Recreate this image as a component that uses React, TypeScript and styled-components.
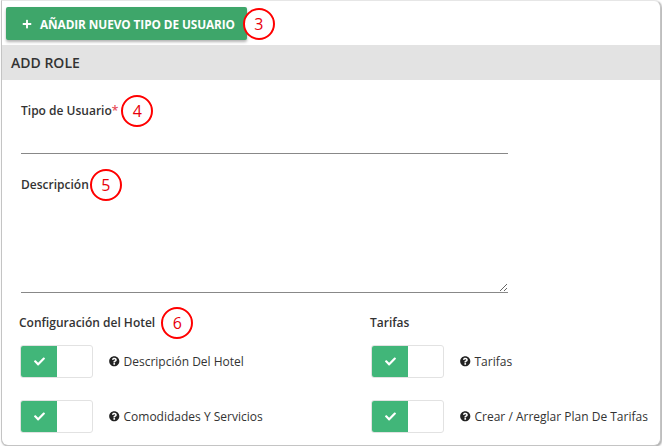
import React from "react";
import styled, { createGlobalStyle } from "styled-components";
import { FaCheck, FaPlus, FaQuestionCircle } from "react-icons/fa";

const Global = createGlobalStyle`
  html, body { margin: 0; padding: 0; background: #fff; }
  body { font-family: "Open Sans", "Liberation Sans", sans-serif; color: #333; }
  * { box-sizing: border-box; }
`;

const Frame = styled.div`
  margin-left: 1px;
  width: 660px;
  height: 446px;
  border: 1px solid #c4c4c4;
  border-top-color: #e6e6e6;
  border-radius: 0 7px 7px 7px;
  box-shadow: 1px 1px 2px rgba(0, 0, 0, 0.35);
  background: #fff;
  overflow: hidden;
  display: flex;
  flex-direction: column;
`;

const Toolbar = styled.div`
  display: flex;
  align-items: center;
  padding: 6px 0 5px 4px;
`;

const AddButton = styled.button`
  display: inline-flex;
  align-items: center;
  gap: 8px;
  height: 33px;
  padding: 0 12px 0 16px;
  border: none;
  border-radius: 2px;
  background: #3ea66a;
  color: #fff;
  font-family: "Open Sans", "Liberation Sans", sans-serif;
  font-weight: 700;
  font-size: 11.8px;
  letter-spacing: -0.08px;
  box-shadow: 0 2px 3px rgba(0, 0, 0, 0.3);
  svg { font-size: 10px; }
`;

const Marker = styled.span<{ $gap: number }>`
  display: inline-flex;
  align-items: center;
  justify-content: center;
  width: 32px;
  height: 32px;
  margin: -8px 0 -8px ${(p) => p.$gap}px;
  border: 2.5px solid #f00;
  border-radius: 50%;
  background: #fff;
  color: #e8000b;
  font-family: "Open Sans", "Liberation Sans", sans-serif;
  font-size: 16px;
  font-weight: 500;
  vertical-align: middle;
  position: relative;
`;

const Header = styled.div`
  height: 35px;
  display: flex;
  align-items: center;
  padding-left: 9px;
  background: #e3e3e3;
  font-size: 14px;
  font-weight: 600;
  color: #333;
`;

const Body = styled.div`
  padding: 0 19px;
  display: flex;
  flex-direction: column;
`;

const Label = styled.div<{ $top: number }>`
  margin-top: ${(p) => p.$top}px;
  display: flex;
  align-items: center;
  height: 17px;
  font-size: 12px;
  font-weight: 600;
  color: #333;
  white-space: nowrap;
`;

const Star = styled.span`
  color: #e74c5a;
`;

const TextInput = styled.input`
  width: 487px;
  height: 35px;
  border: none;
  border-bottom: 1px solid #888;
  outline: none;
  font-family: inherit;
`;

const TextArea = styled.textarea`
  width: 487px;
  height: 100px;
  border: none;
  border-bottom: 1px solid #888;
  outline: none;
  resize: vertical;
  font-family: inherit;
  display: block;
`;

const Columns = styled.div`
  display: grid;
  grid-template-columns: 351px 1fr;
  margin-left: -2px;
  margin-right: -19px;
`;

const Column = styled.div`
  display: flex;
  flex-direction: column;
`;

const PermRow = styled.div<{ $top: number }>`
  display: flex;
  align-items: center;
  margin-top: ${(p) => p.$top}px;
`;

const Toggle = styled.div`
  width: 73px;
  height: 33px;
  margin-left: 1px;
  display: flex;
  flex-shrink: 0;
  border: 1px solid #e2e2e2;
  border-radius: 3px;
  overflow: hidden;
  background: #fff;
`;

const ToggleOn = styled.div`
  width: 36px;
  display: flex;
  align-items: center;
  justify-content: center;
  background: #41b679;
  color: #fff;
  svg { font-size: 11px; }
`;

const PermLabel = styled.div`
  margin-left: 16px;
  display: flex;
  align-items: center;
  gap: 4px;
  font-size: 12px;
  color: #333;
  white-space: nowrap;
  svg { font-size: 10.5px; color: #222; }
`;

const perms = [
  { title: "Configuración del Hotel", marker: "6", items: ["Descripción Del Hotel", "Comodidades Y Servicios"] },
  { title: "Tarifas", marker: null, items: ["Tarifas", "Crear / Arreglar Plan De Tarifas"] },
];

export default function App() {
  return (
    <>
      <Global />
      <Frame>
        <Toolbar>
          <AddButton>
            <FaPlus />
            AÑADIR NUEVO TIPO DE USUARIO
          </AddButton>
          <Marker $gap={-4}>3</Marker>
        </Toolbar>
        <Header>ADD ROLE</Header>
        <Body>
          <Label $top={22}>
            Tipo de Usuario<Star>*</Star>
            <Marker $gap={3}>4</Marker>
          </Label>
          <TextInput />
          <Label $top={22}>
            Descripción
            <Marker $gap={1}>5</Marker>
          </Label>
          <TextArea />
          <Columns>
            {perms.map((col) => (
              <Column key={col.title}>
                <Label $top={21}>
                  {col.title}
                  {col.marker && <Marker $gap={6}>{col.marker}</Marker>}
                </Label>
                {col.items.map((it, i) => (
                  <PermRow key={it} $top={i === 0 ? 14 : 22}>
                    <Toggle>
                      <ToggleOn>
                        <FaCheck />
                      </ToggleOn>
                    </Toggle>
                    <PermLabel>
                      <FaQuestionCircle />
                      {it}
                    </PermLabel>
                  </PermRow>
                ))}
              </Column>
            ))}
          </Columns>
        </Body>
      </Frame>
    </>
  );
}
